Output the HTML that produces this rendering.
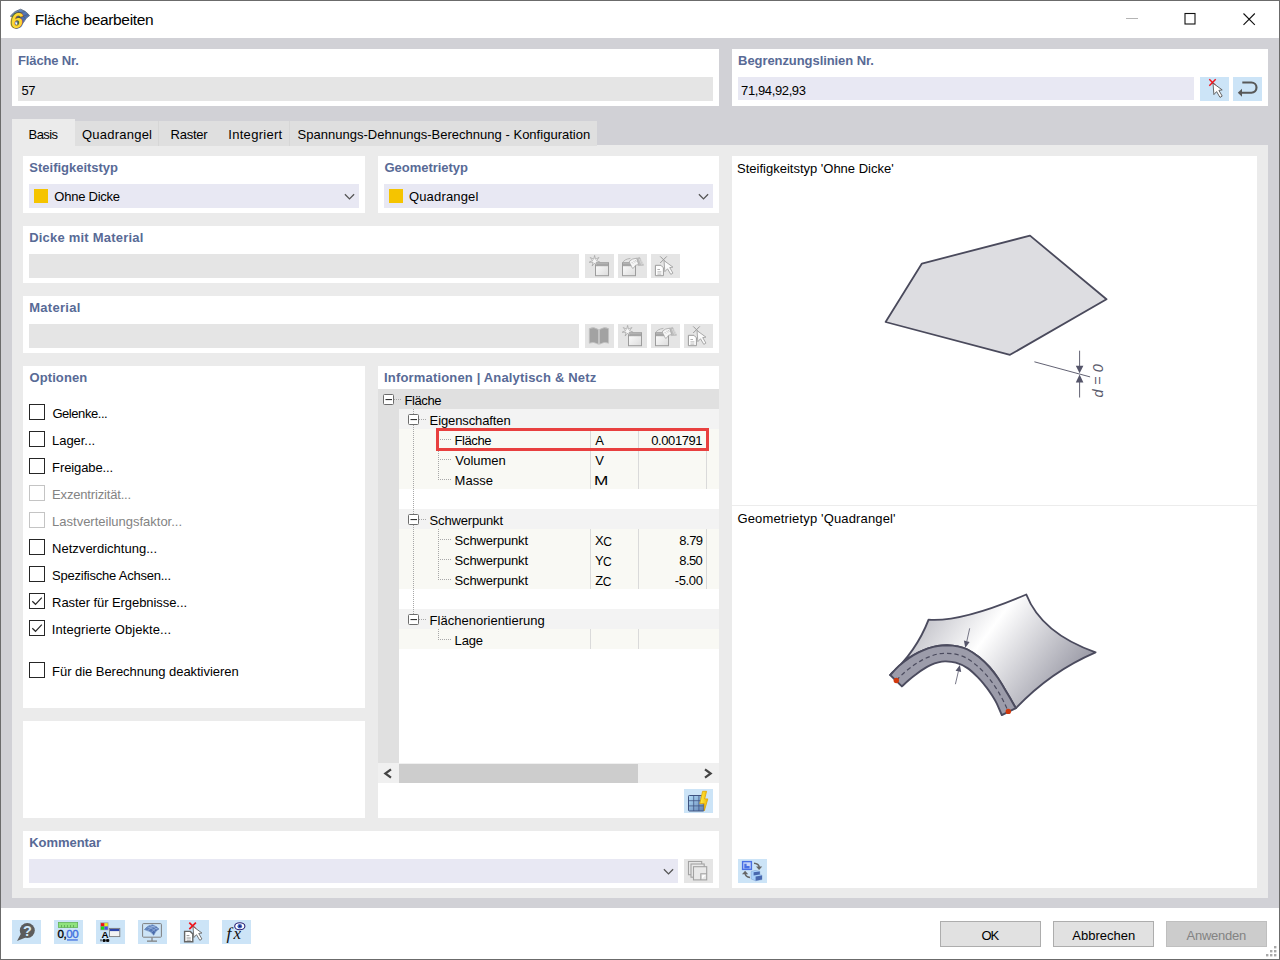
<!DOCTYPE html>
<html lang="de"><head><meta charset="utf-8"><title>Fläche bearbeiten</title>
<style>
html,body{margin:0;padding:0}
body{width:1280px;height:960px;position:relative;overflow:hidden;background:#d1d1d6;font-family:"Liberation Sans",sans-serif;font-size:13px}
body>div,body>svg{position:absolute;box-sizing:content-box}
.t{line-height:20px;white-space:nowrap}
</style></head><body>
<div style="left:0px;top:0px;width:1280px;height:960px;background:#6b6b6b;"></div>
<div style="left:1px;top:1px;width:1278px;height:37px;background:#ffffff;"></div>
<div style="left:1px;top:38px;width:1278px;height:870px;background:#d1d1d6;"></div>
<div style="left:1px;top:908px;width:1278px;height:51px;background:#ffffff;"></div>
<div style="left:12px;top:49px;width:707px;height:57px;background:#fff;"></div>
<div style="left:18px;top:77px;width:695px;height:24px;background:#e5e5e5;"></div>
<div style="left:732px;top:49px;width:536px;height:57px;background:#fff;"></div>
<div style="left:738px;top:77px;width:456px;height:23px;background:#e8e8f3;"></div>
<div style="left:1200px;top:77px;width:29px;height:24px;background:#cce4f7;"></div>
<div style="left:1233px;top:77px;width:29px;height:24px;background:#cce4f7;"></div>
<div style="left:12px;top:145px;width:1256px;height:753px;background:#ebebeb;"></div>
<div style="left:75px;top:121px;width:522px;height:25px;background:#dfdfdf;"></div>
<div style="left:12px;top:119px;width:63px;height:27px;background:#ebebeb;"></div>
<div style="left:158px;top:121px;width:1px;height:25px;background:#d6d6d6;"></div>
<div style="left:289px;top:121px;width:1px;height:25px;background:#d6d6d6;"></div>
<div style="left:23px;top:156px;width:342px;height:57px;background:#fff;"></div>
<div style="left:29px;top:184px;width:330px;height:24px;background:#e8e8f3;"></div>
<div style="left:378px;top:156px;width:341px;height:57px;background:#fff;"></div>
<div style="left:384px;top:184px;width:329px;height:24px;background:#e8e8f3;"></div>
<div style="left:34px;top:189px;width:14px;height:14px;background:#f5c400;"></div>
<div style="left:389px;top:189px;width:14px;height:14px;background:#f5c400;"></div>
<div style="left:23px;top:226px;width:696px;height:57px;background:#fff;"></div>
<div style="left:29px;top:254px;width:550px;height:24px;background:#e5e5e5;"></div>
<div style="left:585px;top:254px;width:29px;height:24px;background:#e5e5e5;"></div>
<div style="left:618px;top:254px;width:29px;height:24px;background:#e5e5e5;"></div>
<div style="left:651px;top:254px;width:29px;height:24px;background:#e5e5e5;"></div>
<div style="left:23px;top:296px;width:696px;height:57px;background:#fff;"></div>
<div style="left:29px;top:324px;width:550px;height:24px;background:#e5e5e5;"></div>
<div style="left:585px;top:324px;width:29px;height:24px;background:#e5e5e5;"></div>
<div style="left:618px;top:324px;width:29px;height:24px;background:#e5e5e5;"></div>
<div style="left:651px;top:324px;width:29px;height:24px;background:#e5e5e5;"></div>
<div style="left:684px;top:324px;width:29px;height:24px;background:#e5e5e5;"></div>
<div style="left:23px;top:366px;width:342px;height:342px;background:#fff;"></div>
<div style="left:23px;top:721px;width:342px;height:97px;background:#fff;"></div>
<div style="left:378px;top:366px;width:341px;height:452px;background:#fff;"></div>
<div style="left:23px;top:831px;width:696px;height:57px;background:#fff;"></div>
<div style="left:29px;top:859px;width:649px;height:24px;background:#e8e8f3;"></div>
<div style="left:684px;top:859px;width:29px;height:24px;background:#e5e5e5;"></div>
<div style="left:732px;top:156px;width:525px;height:732px;background:#fff;"></div>
<div style="left:732px;top:505px;width:525px;height:1px;background:#ececec;"></div>
<div style="left:738px;top:859px;width:29px;height:24px;background:#cce4f7;"></div>
<div style="left:29px;top:404px;width:14px;height:14px;border:1px solid #262626;background:#fff"></div>
<div style="left:29px;top:431px;width:14px;height:14px;border:1px solid #262626;background:#fff"></div>
<div style="left:29px;top:458px;width:14px;height:14px;border:1px solid #262626;background:#fff"></div>
<div style="left:29px;top:485px;width:14px;height:14px;border:1px solid #c4c4c4;background:#fff"></div>
<div style="left:29px;top:512px;width:14px;height:14px;border:1px solid #c4c4c4;background:#fff"></div>
<div style="left:29px;top:539px;width:14px;height:14px;border:1px solid #262626;background:#fff"></div>
<div style="left:29px;top:566px;width:14px;height:14px;border:1px solid #262626;background:#fff"></div>
<div style="left:29px;top:593px;width:14px;height:14px;border:1px solid #262626;background:#fff"></div>
<svg style="left:29px;top:593px" width="16" height="16" viewBox="0 0 16 16"><path d="M3.3 8.2 L6.5 11.3 L12.8 4.6" fill="none" stroke="#262626" stroke-width="1.2"/></svg>
<div style="left:29px;top:620px;width:14px;height:14px;border:1px solid #262626;background:#fff"></div>
<svg style="left:29px;top:620px" width="16" height="16" viewBox="0 0 16 16"><path d="M3.3 8.2 L6.5 11.3 L12.8 4.6" fill="none" stroke="#262626" stroke-width="1.2"/></svg>
<div style="left:29px;top:662px;width:14px;height:14px;border:1px solid #262626;background:#fff"></div>
<div style="left:378px;top:389px;width:341px;height:20px;background:#e0e0e0;"></div>
<div style="left:378px;top:409px;width:21px;height:354px;background:#e0e0e0;"></div>
<div style="left:399px;top:409px;width:320px;height:20px;background:#f3f3f3;"></div>
<div style="left:399px;top:429px;width:320px;height:20px;background:#f9f9f4;"></div>
<div style="left:399px;top:449px;width:320px;height:20px;background:#f9f9f4;"></div>
<div style="left:399px;top:469px;width:320px;height:20px;background:#f9f9f4;"></div>
<div style="left:399px;top:509px;width:320px;height:20px;background:#f3f3f3;"></div>
<div style="left:399px;top:529px;width:320px;height:20px;background:#f9f9f4;"></div>
<div style="left:399px;top:549px;width:320px;height:20px;background:#f9f9f4;"></div>
<div style="left:399px;top:569px;width:320px;height:20px;background:#f9f9f4;"></div>
<div style="left:399px;top:609px;width:320px;height:20px;background:#f3f3f3;"></div>
<div style="left:399px;top:629px;width:320px;height:20px;background:#f9f9f4;"></div>
<div style="left:590px;top:429px;width:1px;height:60px;background:#dadada;"></div>
<div style="left:638px;top:429px;width:1px;height:60px;background:#dadada;"></div>
<div style="left:706px;top:429px;width:1px;height:60px;background:#dadada;"></div>
<div style="left:590px;top:529px;width:1px;height:60px;background:#dadada;"></div>
<div style="left:638px;top:529px;width:1px;height:60px;background:#dadada;"></div>
<div style="left:706px;top:529px;width:1px;height:60px;background:#dadada;"></div>
<div style="left:590px;top:629px;width:1px;height:20px;background:#dadada;"></div>
<div style="left:638px;top:629px;width:1px;height:20px;background:#dadada;"></div>
<div style="left:378px;top:763px;width:341px;height:20px;background:#f0f0f0;"></div>
<div style="left:399px;top:764px;width:239px;height:19px;background:#cdcdcd;"></div>
<div style="left:684px;top:789px;width:29px;height:24px;background:#cce4f7;"></div>
<svg style="left:0;top:0" width="1280" height="960" viewBox="0 0 1280 960" shape-rendering="crispEdges">
<line x1="394" y1="399.5" x2="401" y2="399.5" stroke="#a8a8a8" stroke-dasharray="1 1"/>
<line x1="413.5" y1="409" x2="413.5" y2="614" stroke="#a8a8a8" stroke-dasharray="1 1"/>
<line x1="419" y1="419.5" x2="427" y2="419.5" stroke="#a8a8a8" stroke-dasharray="1 1"/>
<line x1="419" y1="519.5" x2="427" y2="519.5" stroke="#a8a8a8" stroke-dasharray="1 1"/>
<line x1="419" y1="619.5" x2="427" y2="619.5" stroke="#a8a8a8" stroke-dasharray="1 1"/>
<line x1="438.5" y1="429" x2="438.5" y2="480" stroke="#a8a8a8" stroke-dasharray="1 1"/>
<line x1="440" y1="439.5" x2="451" y2="439.5" stroke="#a8a8a8" stroke-dasharray="1 1"/>
<line x1="440" y1="459.5" x2="451" y2="459.5" stroke="#a8a8a8" stroke-dasharray="1 1"/>
<line x1="440" y1="479.5" x2="451" y2="479.5" stroke="#a8a8a8" stroke-dasharray="1 1"/>
<line x1="438.5" y1="529" x2="438.5" y2="580" stroke="#a8a8a8" stroke-dasharray="1 1"/>
<line x1="440" y1="539.5" x2="451" y2="539.5" stroke="#a8a8a8" stroke-dasharray="1 1"/>
<line x1="440" y1="559.5" x2="451" y2="559.5" stroke="#a8a8a8" stroke-dasharray="1 1"/>
<line x1="440" y1="579.5" x2="451" y2="579.5" stroke="#a8a8a8" stroke-dasharray="1 1"/>
<line x1="438.5" y1="629" x2="438.5" y2="640" stroke="#a8a8a8" stroke-dasharray="1 1"/>
<line x1="440" y1="639.5" x2="451" y2="639.5" stroke="#a8a8a8" stroke-dasharray="1 1"/>
<g shape-rendering="geometricPrecision">
<rect x="383.5" y="394.5" width="10" height="10" rx="1" fill="#fff" stroke="#6c6c6c"/><rect x="385.5" y="399" width="6.5" height="1.1" fill="#333"/>
<rect x="408.5" y="414.5" width="10" height="10" rx="1" fill="#fff" stroke="#6c6c6c"/><rect x="410.5" y="419" width="6.5" height="1.1" fill="#333"/>
<rect x="408.5" y="514.5" width="10" height="10" rx="1" fill="#fff" stroke="#6c6c6c"/><rect x="410.5" y="519" width="6.5" height="1.1" fill="#333"/>
<rect x="408.5" y="614.5" width="10" height="10" rx="1" fill="#fff" stroke="#6c6c6c"/><rect x="410.5" y="619" width="6.5" height="1.1" fill="#333"/>
<rect x="437.5" y="429.5" width="270" height="20" fill="none" stroke="#e8403f" stroke-width="3"/>
<path d="M391 769.3 L385.3 773.5 L391 777.7" fill="none" stroke="#444" stroke-width="2.2"/>
<path d="M705 769.3 L710.7 773.5 L705 777.7" fill="none" stroke="#444" stroke-width="2.2"/>
</g></svg>
<div style="left:12px;top:920px;width:29px;height:24px;background:#cce4f7;"></div>
<div style="left:54px;top:920px;width:29px;height:24px;background:#cce4f7;"></div>
<div style="left:96px;top:920px;width:29px;height:24px;background:#cce4f7;"></div>
<div style="left:138px;top:920px;width:29px;height:24px;background:#cce4f7;"></div>
<div style="left:180px;top:920px;width:29px;height:24px;background:#cce4f7;"></div>
<div style="left:222px;top:920px;width:29px;height:24px;background:#cce4f7;"></div>
<div style="left:940px;top:921px;width:99px;height:24px;background:#e1e1e1;border:1px solid #adadad"></div>
<div style="left:1053px;top:921px;width:99px;height:24px;background:#e1e1e1;border:1px solid #adadad"></div>
<div style="left:1166px;top:921px;width:99px;height:24px;background:#cccccc;border:1px solid #bfbfbf"></div>
<svg style="left:0;top:0" width="1280" height="960" viewBox="0 0 1280 960">
<defs>
<linearGradient id="gw" x1="0" y1="0" x2="1" y2="1"><stop offset="0" stop-color="#fff"/><stop offset="1" stop-color="#dcdcdc"/></linearGradient>
<linearGradient id="gcell" x1="0" y1="0" x2="1" y2="1"><stop offset="0" stop-color="#b4e0fb"/><stop offset="1" stop-color="#5f7fb2"/></linearGradient>
<linearGradient id="gbolt" x1="0" y1="0" x2="1" y2="0"><stop offset="0" stop-color="#fff04a"/><stop offset="1" stop-color="#f2b800"/></linearGradient>
<linearGradient id="gsurf" x1="0" y1="0" x2="1" y2="1"><stop offset="0" stop-color="#7398cc"/><stop offset="1" stop-color="#36589e"/></linearGradient>
<linearGradient id="gshell" gradientUnits="userSpaceOnUse" x1="925" y1="600" x2="1060" y2="700"><stop offset="0" stop-color="#b9b9c1"/><stop offset="0.42" stop-color="#ffffff"/><stop offset="1" stop-color="#9a9aa6"/></linearGradient>
</defs>
<g>
<path d="M10.3 16.2 Q14.5 10.5 20.6 9.2 Q26.5 11 29.6 15.6 Q26 17.5 23.4 22.6 Q21.5 25.5 19.5 26.5 L14 17.5 Z" fill="url(#gsurf)" stroke="#6b7788" stroke-width="0.9"/>
<path d="M14 13 Q19 15 22 21 M17.5 10.8 Q22.5 13 25 18.5 M13 17 Q18 12.5 25 11.5 M17 20 Q22 15.5 28 14.5" fill="none" stroke="#4d586a" stroke-width="0.7" opacity="0.85"/>
<text x="10.5" y="28.2" font-family="'Liberation Sans',sans-serif" font-size="21.5" font-weight="700" font-style="italic" fill="#fdd835" stroke="#55502e" stroke-width="1.5" paint-order="stroke" textLength="12.2" lengthAdjust="spacingAndGlyphs">6</text>
</g>
<path d="M1126 18.5 H1138" stroke="#b4b4b4" stroke-width="1"/>
<rect x="1185" y="13.5" width="10" height="10.5" fill="none" stroke="#111" stroke-width="1.1"/>
<path d="M1243.5 13.5 L1254.8 24.8 M1254.8 13.5 L1243.5 24.8" stroke="#111" stroke-width="1.1"/>
<path d="M344.9 194.3 L349.5 198.9 L354.1 194.3" fill="none" stroke="#555" stroke-width="1.3"/>
<path d="M698.9 194.3 L703.5 198.9 L708.1 194.3" fill="none" stroke="#555" stroke-width="1.3"/>
<path d="M663.9 869.3 L668.5 873.9 L673.1 869.3" fill="none" stroke="#555" stroke-width="1.3"/>
<path d="M1209.3 79.3 L1215.7 85.7 M1215.7 79.3 L1209.3 85.7" stroke="#f0141c" stroke-width="1.45"/>
<path d="M1213.00 83.20 L1213.90 94.60 L1216.60 91.60 L1220.00 97.40 L1222.20 96.10 L1218.90 90.40 L1222.20 89.90 Z" fill="#fff" stroke="#555" stroke-width="0.9" stroke-linejoin="round"/>
<path d="M1242.3 82.5 H1251.4 A5.1 5.1 0 0 1 1251.4 92.7 H1241" fill="none" stroke="#585858" stroke-width="2.15"/><path d="M1237.8 92.7 L1242 88.7 V96.7 Z" fill="#585858"/>
<rect x="595.5" y="262.7" width="13" height="13" fill="url(#gw)" stroke="#9c9c9c"/><rect x="596" y="263.2" width="12" height="3" fill="#a6a6a6"/><polygon points="594.60,255.40 595.47,259.20 598.98,257.51 596.55,260.55 600.06,262.25 596.16,262.25 597.03,266.05 594.60,263.00 592.17,266.05 593.04,262.25 589.14,262.25 592.65,260.55 590.22,257.51 593.73,259.20" fill="#f6f6f6" stroke="#a0a0a0" stroke-width="0.7"/>
<rect x="622.5" y="262.7" width="13" height="13" fill="url(#gw)" stroke="#9c9c9c"/><rect x="623" y="263.2" width="12" height="3" fill="#a6a6a6"/><path d="M622.6 263 Q624 259.2 630.4 258.4" fill="none" stroke="#a8a8a8" stroke-width="0.8"/><path d="M636.4 258.4 L639.6 257.4 L643.6 265.2 L638.2 265.6 Z" fill="#bdbdbd" stroke="#b4b4b4" stroke-width="0.6"/><path d="M639.2 259 L641.6 264.6 M640.8 259.2 L642.8 264.4" stroke="#e2e2e2" stroke-width="0.7"/><path d="M629.6 261 Q632 258.6 636.6 258.2 L638.6 264.4 L635.4 265.4 Q634.4 268 632.6 268.4 Q631.2 266.4 630.6 264.6 Q629 263 629.6 261 Z" fill="#f6f6f6" stroke="#a4a4a4" stroke-width="0.8"/><path d="M631.6 262 l1.6 1.6 M633.4 260.8 l1.6 1.8 M635 260 l1.4 1.8" stroke="#b4b4b4" stroke-width="0.7" fill="none"/>
<path d="M655.4 265.3 H660.9 L663.4 267.8 V275.7 H655.4 Z" fill="#fff" stroke="#9a9a9a" stroke-width="1.0"/><path d="M657.4 269.5 H660.0 M657.4 271.90000000000003 H661.4 M657.4 274.1 H661.4" stroke="#a8a8a8" stroke-width="0.9"/><path d="M660.2 256.4 L666.8000000000001 263.0 M666.8000000000001 256.4 L660.2 263.0" stroke="#9a9a9a" stroke-width="1.0"/><path d="M664.00 260.60 L664.87 271.66 L667.49 268.75 L670.79 274.37 L672.92 273.11 L669.72 267.58 L672.92 267.10 Z" fill="#fafafa" stroke="#a0a0a0" stroke-width="0.9" stroke-linejoin="round"/>
<path d="M589.3 328.6 Q593.5 326.2 598.5 329.6 V344.3 Q593.5 341.2 589.3 343.2 Z" fill="#a2a2a2" stroke="#c4c4c4" stroke-width="0.8"/><path d="M608.6 328.6 Q604.4 326.2 599.4 329.6 V344.3 Q604.4 341.2 608.6 343.2 Z" fill="#a2a2a2" stroke="#c4c4c4" stroke-width="0.8"/>
<rect x="628.5" y="332.7" width="13" height="13" fill="url(#gw)" stroke="#9c9c9c"/><rect x="629" y="333.2" width="12" height="3" fill="#a6a6a6"/><polygon points="627.60,325.40 628.47,329.20 631.98,327.51 629.55,330.55 633.06,332.25 629.16,332.25 630.03,336.05 627.60,333.00 625.17,336.05 626.04,332.25 622.14,332.25 625.65,330.55 623.22,327.51 626.73,329.20" fill="#f6f6f6" stroke="#a0a0a0" stroke-width="0.7"/>
<rect x="655.5" y="332.7" width="13" height="13" fill="url(#gw)" stroke="#9c9c9c"/><rect x="656" y="333.2" width="12" height="3" fill="#a6a6a6"/><path d="M655.6 333 Q657 329.2 663.4 328.4" fill="none" stroke="#a8a8a8" stroke-width="0.8"/><path d="M669.4 328.4 L672.6 327.4 L676.6 335.2 L671.2 335.6 Z" fill="#bdbdbd" stroke="#b4b4b4" stroke-width="0.6"/><path d="M672.2 329 L674.6 334.6 M673.8 329.2 L675.8 334.4" stroke="#e2e2e2" stroke-width="0.7"/><path d="M662.6 331 Q665 328.6 669.6 328.2 L671.6 334.4 L668.4 335.4 Q667.4 338 665.6 338.4 Q664.2 336.4 663.6 334.6 Q662 333 662.6 331 Z" fill="#f6f6f6" stroke="#a4a4a4" stroke-width="0.8"/><path d="M664.6 332 l1.6 1.6 M666.4 330.8 l1.6 1.8 M668 330 l1.4 1.8" stroke="#b4b4b4" stroke-width="0.7" fill="none"/>
<path d="M688.4 335.3 H693.9 L696.4 337.8 V345.7 H688.4 Z" fill="#fff" stroke="#9a9a9a" stroke-width="1.0"/><path d="M690.4 339.5 H693.0 M690.4 341.90000000000003 H694.4 M690.4 344.1 H694.4" stroke="#a8a8a8" stroke-width="0.9"/><path d="M693.2 326.4 L699.8000000000001 333.0 M699.8000000000001 326.4 L693.2 333.0" stroke="#9a9a9a" stroke-width="1.0"/><path d="M697.00 330.60 L697.87 341.66 L700.49 338.75 L703.79 344.37 L705.92 343.11 L702.72 337.58 L705.92 337.10 Z" fill="#fafafa" stroke="#a0a0a0" stroke-width="0.9" stroke-linejoin="round"/>
<rect x="688.5" y="861.5" width="13.2" height="13.2" fill="#e9e9e9" stroke="#a2a2a2" stroke-width="1.1"/>
<rect x="691" y="864" width="13.2" height="13.2" fill="#e9e9e9" stroke="#a2a2a2" stroke-width="1.1"/>
<rect x="693.5" y="866.7" width="13.2" height="13.2" fill="#e9e9e9" stroke="#a2a2a2" stroke-width="1.1"/>
<path d="M700.8 879.9 V873.8 H706.7" fill="none" stroke="#a2a2a2" stroke-width="1.1"/><path d="M702 878.8 L705.8 875 L702.2 875.2 Z" fill="#fff"/>
<rect x="688.5" y="795.5" width="15.5" height="15.5" rx="0.8" fill="url(#gcell)" stroke="#3e5280" stroke-width="1"/>
<path d="M693.7 795.5 V811 M698.9 795.5 V811 M688.5 800.7 H704 M688.5 805.9 H704" stroke="#3e5280" stroke-width="0.75"/>
<path d="M702.6 791.3 H706.6 L704.7 798.9 H707.8 L704.4 810.6 L704.2 803.5 L699.8 803.7 Z" fill="url(#gbolt)" stroke="#e2a300" stroke-width="0.8" stroke-linejoin="round"/>
<rect x="742.6" y="861.6" width="8.8" height="7.8" fill="#c9d6fa" stroke="#4a70e4" stroke-width="1.4"/><path d="M744.3 868.6 V863.8 H746.6 V866 H749.6 V868.6 Z" fill="#4a70e4"/>
<path d="M754 863.3 Q758.6 863.6 759.2 867" fill="none" stroke="#666" stroke-width="1.5"/><path d="M756 866.6 H762.2 L759.1 870 Z" fill="#666"/>
<path d="M750 877.4 Q745.6 877 745.2 873.6" fill="none" stroke="#666" stroke-width="1.5"/><path d="M742 874.2 H748.2 L745.1 870.8 Z" fill="#666"/>
<path d="M751.2 871.6 L755 870.4 L759.8 871.2 V874.8 L762 875.2 V879.6 L755.6 880.8 L751.2 879 Z" fill="#a9d1fb" stroke="#7f9fd0" stroke-width="0.5"/><path d="M753.6 872.2 L759.8 871.4 V874.6 L753.6 875.6 Z M755.6 876.4 L762 875.4 V879.6 L755.6 880.8 Z" fill="#4868ae"/>
<circle cx="27.3" cy="930.5" r="7.5" fill="#5c5c5c"/><path d="M17 940.9 L21 933.6 L25.6 937.6 Z" fill="#5c5c5c"/>
<text x="27.4" y="936.1" text-anchor="middle" font-family="'Liberation Sans',sans-serif" font-size="14.5" font-weight="700" fill="#d2e8f9">?</text>
<rect x="58.4" y="922.6" width="19.2" height="4.8" fill="#8fe27e" stroke="#62b356" stroke-width="0.8"/><path d="M61.5 925 V927.4 M64.5 925 V927.4 M67.5 925 V927.4 M70.5 925 V927.4 M73.5 925 V927.4" stroke="#5aa650" stroke-width="0.8"/>
<text x="57.6" y="938.1" font-family="'Liberation Sans',sans-serif" font-size="11.6" letter-spacing="-0.5" fill="#000" stroke="#000" stroke-width="0.35">0,<tspan fill="#3f6fe0" stroke="#3f6fe0">00</tspan></text><rect x="67" y="939.3" width="10.8" height="1.3" fill="#3f6fe0"/>
<rect x="100.2" y="922.4" width="8.2" height="7.8" fill="#9a9a9a"/><rect x="101" y="923.2" width="3.2" height="3" fill="#f01010"/><rect x="104.6" y="923.2" width="3.1" height="3" fill="#f4ee10"/><rect x="101" y="926.6" width="3.2" height="3" fill="#18d818"/><rect x="104.6" y="926.6" width="3.1" height="3" fill="#4050f0"/>
<text x="101.4" y="938.3" font-family="'Liberation Sans',sans-serif" font-size="9.8" font-weight="700" fill="#000">A</text><path d="M101 939.2 V941.4 M103 939.6 H105.2 V941.4 H103 Z M106.6 939.6 H108.8 V941.4 H106.6 Z" stroke="#000" stroke-width="0.9" fill="#000"/>
<rect x="109.4" y="928.4" width="10.4" height="8.2" fill="#f2f2f2" stroke="#7a7a7a" stroke-width="0.9"/><rect x="109.9" y="928.9" width="9.4" height="2.2" fill="#2c44a8"/>
<rect x="142.6" y="923.6" width="18.8" height="13.6" rx="0.8" fill="none" stroke="#7e7e7e" stroke-width="1"/><path d="M152 937.4 V941 M147 941.2 H157" stroke="#7e7e7e" stroke-width="1.2"/>
<path d="M144.4 929.6 Q147 925.4 152.4 924.8 Q156.6 926 159 929 Q155.6 930.4 153.8 935.2 Q151 931 144.4 929.6 Z" fill="url(#gsurf)" stroke="#5a78b0" stroke-width="0.5"/><path d="M147.6 926.8 Q152.6 928 155.4 931.6 M150 925.6 Q154.6 926.8 157.4 929.6 M148 930.4 Q151 926.4 156 925.8 M151.4 932.4 Q153.4 928.6 158 928" fill="none" stroke="#c7dcf8" stroke-width="0.45"/>
<path d="M184.6 931.4 H190.29999999999998 L192.79999999999998 933.9 V941.6999999999999 H184.6 Z" fill="#fff" stroke="#666" stroke-width="1.4"/><path d="M186.6 935.6 H189.39999999999998 M186.6 938.0 H190.79999999999998 M186.6 940.1999999999999 H190.79999999999998" stroke="#888" stroke-width="0.9"/><path d="M189.3 922.6 L195.9 929.2 M195.9 922.6 L189.3 929.2" stroke="#f0141c" stroke-width="1.7"/><path d="M193.00 926.50 L193.87 937.56 L196.49 934.65 L199.79 940.27 L201.92 939.01 L198.72 933.48 L201.92 933.00 Z" fill="#fff" stroke="#666" stroke-width="0.9" stroke-linejoin="round"/>
<text y="939.3" font-family="'Liberation Serif',serif" font-size="17.5" font-style="italic" fill="#111"><tspan x="226.6">f</tspan><tspan x="233.4" font-size="17">x</tspan></text>
<ellipse cx="239.8" cy="926.2" rx="5.1" ry="3.5" fill="#fff" stroke="#2a1f74" stroke-width="1.1"/><circle cx="239.8" cy="926.2" r="2.3" fill="#3f66c8"/><circle cx="239.8" cy="926.2" r="1" fill="#1a1850"/>
<rect x="1274" y="946" width="2.4" height="2.4" fill="#a9a9a9"/><rect x="1270" y="950" width="2.4" height="2.4" fill="#a9a9a9"/><rect x="1274" y="950" width="2.4" height="2.4" fill="#a9a9a9"/><rect x="1266" y="954" width="2.4" height="2.4" fill="#a9a9a9"/><rect x="1270" y="954" width="2.4" height="2.4" fill="#a9a9a9"/><rect x="1274" y="954" width="2.4" height="2.4" fill="#a9a9a9"/>
<polygon points="921.9,263.6 1030,235.6 1106.5,299.3 1010,354.8 885.6,322" fill="#dddde1" stroke="#4a4a5c" stroke-width="1.8" stroke-linejoin="round"/>
<path d="M1034.4 361.8 L1090.1 376.9 M1079.6 350.7 V366 M1079.6 382 V397.5" stroke="#5a5a6b" stroke-width="0.95" fill="none"/>
<path d="M1075.8 365.8 H1083.4 L1079.6 373.3 Z M1075.8 382.6 H1083.4 L1079.6 374.6 Z" fill="#55556a"/>
<text transform="translate(1103.2 397.6) rotate(-90)" font-family="'Liberation Sans',sans-serif" font-size="14.5" font-style="italic" fill="#5a5a6b" letter-spacing="0.2">d = 0</text>
<path d="M890.2 675.0 Q916.1 652.0 928.6 619.7 Q961.7 622.2 1026.3 594.5 Q1041.6 633.4 1095.6 652.3 Q1050.3 671.7 1015.9 708.2 C1015.1 706.9 1013.0 703.2 1011.3 700.2 C1009.5 697.2 1007.6 693.9 1005.4 690.3 C1003.2 686.6 1000.8 682.2 998.1 678.3 C995.5 674.4 992.5 670.5 989.4 667.0 C986.2 663.4 982.8 660.1 979.2 657.2 C975.5 654.3 971.1 651.3 967.5 649.5 C963.9 647.6 960.7 647.0 957.3 646.3 C953.9 645.5 950.4 645.3 947.1 645.2 C943.8 645.2 940.8 645.4 937.6 646.0 C934.4 646.5 931.3 647.4 928.1 648.4 C925.0 649.5 921.8 650.8 918.6 652.4 C915.5 654.0 912.4 655.7 909.2 657.9 C905.9 660.2 902.1 663.1 899.0 665.9 C895.8 668.8 891.7 673.5 890.2 675.0 Z" fill="url(#gshell)" stroke="#4b4b5e" stroke-width="1.9" stroke-linejoin="round"/>
<path d="M890.2 675.0 C891.7 673.5 895.8 668.8 899.0 665.9 C902.1 663.1 905.9 660.2 909.2 657.9 C912.4 655.7 915.5 654.0 918.6 652.4 C921.8 650.8 925.0 649.5 928.1 648.4 C931.3 647.4 934.4 646.5 937.6 646.0 C940.8 645.4 943.8 645.2 947.1 645.2 C950.4 645.3 953.9 645.5 957.3 646.3 C960.7 647.0 963.9 647.6 967.5 649.5 C971.1 651.3 975.5 654.3 979.2 657.2 C982.8 660.1 986.2 663.4 989.4 667.0 C992.5 670.5 995.5 674.4 998.1 678.3 C1000.8 682.2 1003.2 686.6 1005.4 690.3 C1007.6 693.9 1009.5 697.2 1011.3 700.2 C1013.0 703.2 1015.1 706.9 1015.9 708.2 L1001.8 715.1 C1000.9 713.1 998.2 706.6 996.7 703.4 C995.1 700.2 994.0 698.5 992.3 695.8 C990.6 693.2 988.9 690.5 986.5 687.4 C984.0 684.3 980.9 680.4 977.7 677.2 C974.6 674.0 971.1 670.5 967.5 668.1 C963.9 665.7 959.5 663.8 955.8 662.7 C952.2 661.6 948.5 661.5 945.6 661.4 C942.7 661.3 940.8 661.7 938.3 662.3 C935.9 662.9 933.5 663.7 931.0 664.8 C928.6 665.9 926.2 667.3 923.8 668.9 C921.3 670.4 918.9 672.1 916.5 674.0 C914.0 675.8 911.6 677.7 909.2 679.8 C906.7 681.9 903.1 685.3 901.9 686.4 Z" fill="#9c9caa" stroke="#4b4b5e" stroke-width="1.9" stroke-linejoin="round"/>
<path d="M896.3 680.5 C897.7 679.2 901.5 675.0 904.4 672.5 C907.2 670.0 910.4 667.7 913.3 665.6 C916.1 663.6 918.8 661.9 921.6 660.4 C924.3 658.9 927.1 657.5 929.9 656.5 C932.6 655.4 935.3 654.5 938.0 654.0 C940.8 653.4 943.3 653.2 946.4 653.3 C949.4 653.3 953.0 653.5 956.6 654.4 C960.1 655.3 963.9 656.6 967.5 658.6 C971.1 660.7 975.0 663.9 978.4 667.0 C981.8 670.0 985.1 673.6 987.9 676.9 C990.7 680.2 993.0 683.5 995.2 686.8 C997.4 690.1 999.4 693.6 1001.0 696.6 C1002.7 699.5 1003.9 702.1 1005.1 704.6 C1006.3 707.1 1007.8 710.3 1008.3 711.4" fill="none" stroke="#4b4b5e" stroke-width="1.2" stroke-dasharray="4.4 3"/>
<path d="M969.7 628.3 L966.8 641.3" stroke="#55556a" stroke-width="0.8"/><path d="M963.9 640.6 L969.6 641.9 L965.3 647.7 Z" fill="#55556a"/>
<path d="M955.4 684.2 L958.4 671.3" stroke="#55556a" stroke-width="0.8"/><path d="M961.2 672.0 L955.6 670.7 L959.9 664.9 Z" fill="#55556a"/>
<circle cx="896.3" cy="680.5" r="2.7" fill="#d2380c"/>
<circle cx="1008.3" cy="711.4" r="2.7" fill="#d2380c"/>
</svg>
<div class="t" style="left:34.87px;top:10px;font-size:15.5px;font-weight:400;letter-spacing:-0.330px;color:#000000;">Fläche bearbeiten</div>
<div class="t" style="left:18.10px;top:51px;font-size:13px;font-weight:700;letter-spacing:-0.166px;color:#586a96;">Fläche Nr.</div>
<div class="t" style="left:21.40px;top:81px;font-size:13px;font-weight:400;letter-spacing:-0.310px;color:#000000;">57</div>
<div class="t" style="left:738.10px;top:51px;font-size:13px;font-weight:700;letter-spacing:-0.073px;color:#586a96;">Begrenzungslinien Nr.</div>
<div class="t" style="left:741.12px;top:81px;font-size:13px;font-weight:400;letter-spacing:-0.385px;color:#000000;">71,94,92,93</div>
<div class="t" style="left:28.60px;top:125px;font-size:13px;font-weight:400;letter-spacing:-0.615px;color:#000000;">Basis</div>
<div class="t" style="left:81.94px;top:125px;font-size:13px;font-weight:400;letter-spacing:0.235px;color:#000000;">Quadrangel</div>
<div class="t" style="left:170.60px;top:125px;font-size:13px;font-weight:400;letter-spacing:-0.261px;color:#000000;">Raster</div>
<div class="t" style="left:228.30px;top:125px;font-size:13px;font-weight:400;letter-spacing:0.291px;color:#000000;">Integriert</div>
<div class="t" style="left:297.60px;top:125px;font-size:13px;font-weight:400;letter-spacing:0.015px;color:#000000;">Spannungs-Dehnungs-Berechnung - Konfiguration</div>
<div class="t" style="left:29.36px;top:158px;font-size:13px;font-weight:700;letter-spacing:-0.018px;color:#586a96;">Steifigkeitstyp</div>
<div class="t" style="left:384.52px;top:158px;font-size:13px;font-weight:700;letter-spacing:-0.032px;color:#586a96;">Geometrietyp</div>
<div class="t" style="left:54.34px;top:187px;font-size:13px;font-weight:400;letter-spacing:-0.242px;color:#000000;">Ohne Dicke</div>
<div class="t" style="left:408.94px;top:187px;font-size:13px;font-weight:400;letter-spacing:0.166px;color:#000000;">Quadrangel</div>
<div class="t" style="left:29.20px;top:228px;font-size:13px;font-weight:700;letter-spacing:0.209px;color:#586a96;">Dicke mit Material</div>
<div class="t" style="left:29.20px;top:298px;font-size:13px;font-weight:700;letter-spacing:0.282px;color:#586a96;">Material</div>
<div class="t" style="left:29.52px;top:368px;font-size:13px;font-weight:700;letter-spacing:0.090px;color:#586a96;">Optionen</div>
<div class="t" style="left:384.10px;top:368px;font-size:13px;font-weight:700;letter-spacing:0.163px;color:#586a96;">Informationen | Analytisch &amp; Netz</div>
<div class="t" style="left:29.20px;top:833px;font-size:13px;font-weight:700;letter-spacing:-0.046px;color:#586a96;">Kommentar</div>
<div class="t" style="left:737.10px;top:159px;font-size:13px;font-weight:400;letter-spacing:-0.006px;color:#000000;">Steifigkeitstyp 'Ohne Dicke'</div>
<div class="t" style="left:737.41px;top:509px;font-size:13px;font-weight:400;letter-spacing:0.152px;color:#000000;">Geometrietyp 'Quadrangel'</div>
<div class="t" style="left:52.41px;top:404px;font-size:13px;font-weight:400;letter-spacing:-0.439px;color:#000000;">Gelenke...</div>
<div class="t" style="left:52.10px;top:431px;font-size:13px;font-weight:400;letter-spacing:-0.057px;color:#000000;">Lager...</div>
<div class="t" style="left:52.10px;top:458px;font-size:13px;font-weight:400;letter-spacing:-0.111px;color:#000000;">Freigabe...</div>
<div class="t" style="left:52.10px;top:485px;font-size:13px;font-weight:400;letter-spacing:-0.174px;color:#838383;">Exzentrizität...</div>
<div class="t" style="left:52.10px;top:512px;font-size:13px;font-weight:400;letter-spacing:-0.005px;color:#838383;">Lastverteilungsfaktor...</div>
<div class="t" style="left:52.10px;top:539px;font-size:13px;font-weight:400;letter-spacing:0.011px;color:#000000;">Netzverdichtung...</div>
<div class="t" style="left:52.10px;top:566px;font-size:13px;font-weight:400;letter-spacing:-0.230px;color:#000000;">Spezifische Achsen...</div>
<div class="t" style="left:52.10px;top:593px;font-size:13px;font-weight:400;letter-spacing:-0.070px;color:#000000;">Raster für Ergebnisse...</div>
<div class="t" style="left:51.80px;top:620px;font-size:13px;font-weight:400;letter-spacing:0.071px;color:#000000;">Integrierte Objekte...</div>
<div class="t" style="left:52.10px;top:662px;font-size:13px;font-weight:400;letter-spacing:-0.045px;color:#000000;">Für die Berechnung deaktivieren</div>
<div class="t" style="left:404.60px;top:391px;font-size:13px;font-weight:400;letter-spacing:-0.441px;color:#000000;">Fläche</div>
<div class="t" style="left:429.60px;top:411px;font-size:13px;font-weight:400;letter-spacing:-0.108px;color:#000000;">Eigenschaften</div>
<div class="t" style="left:454.60px;top:431px;font-size:13px;font-weight:400;letter-spacing:-0.441px;color:#000000;">Fläche</div>
<div class="t" style="left:455.25px;top:451px;font-size:13px;font-weight:400;letter-spacing:-0.004px;color:#000000;">Volumen</div>
<div class="t" style="left:454.60px;top:471px;font-size:13px;font-weight:400;letter-spacing:0.053px;color:#000000;">Masse</div>
<div class="t" style="left:429.60px;top:511px;font-size:13px;font-weight:400;letter-spacing:-0.168px;color:#000000;">Schwerpunkt</div>
<div class="t" style="left:454.60px;top:531px;font-size:13px;font-weight:400;letter-spacing:-0.168px;color:#000000;">Schwerpunkt</div>
<div class="t" style="left:454.60px;top:551px;font-size:13px;font-weight:400;letter-spacing:-0.168px;color:#000000;">Schwerpunkt</div>
<div class="t" style="left:454.60px;top:571px;font-size:13px;font-weight:400;letter-spacing:-0.168px;color:#000000;">Schwerpunkt</div>
<div class="t" style="left:429.60px;top:611px;font-size:13px;font-weight:400;letter-spacing:0.010px;color:#000000;">Flächenorientierung</div>
<div class="t" style="left:454.60px;top:631px;font-size:13px;font-weight:400;letter-spacing:-0.182px;color:#000000;">Lage</div>
<div class="t" style="left:595.27px;top:431px;font-size:13px;font-weight:400;letter-spacing:0.000px;color:#000000;">A</div>
<div class="t" style="left:595.25px;top:451px;font-size:13px;font-weight:400;letter-spacing:0.000px;color:#000000;">V</div>
<div class="t" style="left:594.15px;top:471px;font-size:13px;font-weight:400;letter-spacing:0.000px;color:#000000;transform:scaleX(1.32);transform-origin:0 0;">M</div>
<div class="t" style="left:651.22px;top:431px;font-size:13px;font-weight:400;letter-spacing:-0.410px;color:#000000;">0.001791</div>
<div class="t" style="left:679.37px;top:531px;font-size:13px;font-weight:400;letter-spacing:-0.520px;color:#000000;">8.79</div>
<div class="t" style="left:679.37px;top:551px;font-size:13px;font-weight:400;letter-spacing:-0.609px;color:#000000;">8.50</div>
<div class="t" style="left:674.66px;top:571px;font-size:13px;font-weight:400;letter-spacing:-0.350px;color:#000000;">-5.00</div>
<div class="t" style="left:981.44px;top:926px;font-size:13px;font-weight:400;letter-spacing:-1.031px;color:#000000;">OK</div>
<div class="t" style="left:1072.27px;top:926px;font-size:13px;font-weight:400;letter-spacing:0.010px;color:#000000;">Abbrechen</div>
<div class="t" style="left:1186.47px;top:926px;font-size:13px;font-weight:400;letter-spacing:-0.225px;color:#838383;">Anwenden</div>
<div class="t" style="left:594.94px;top:531px;font-size:13px;font-weight:400;letter-spacing:-0.337px;color:#000000;">X<span style="font-size:12px;position:relative;top:1.2px">C</span></div>
<div class="t" style="left:594.97px;top:551px;font-size:13px;font-weight:400;letter-spacing:-0.765px;color:#000000;">Y<span style="font-size:12px;position:relative;top:1.2px">C</span></div>
<div class="t" style="left:595.15px;top:571px;font-size:13px;font-weight:400;letter-spacing:-0.451px;color:#000000;">Z<span style="font-size:12px;position:relative;top:1.2px">C</span></div>
</body></html>
